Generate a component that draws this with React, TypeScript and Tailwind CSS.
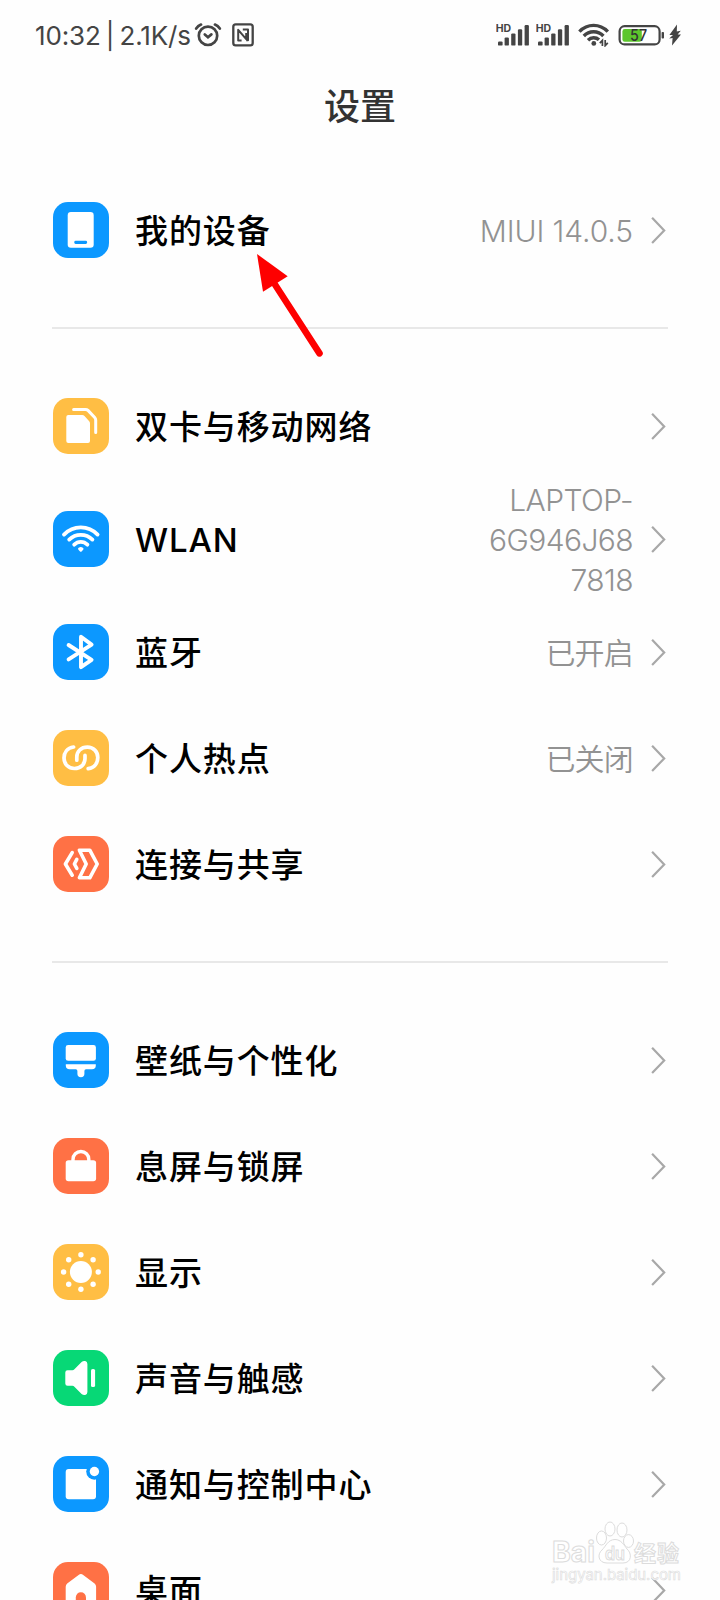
import React from 'react';

interface SettingItem {
  label: string;
  icon: React.ReactNode;
  color: string;
  value?: string;
  labelClass?: string;
  valueClass?: string;
}

const BLUE = 'bg-[#0c98ff]';
const YELLOW = 'bg-[#ffbe44]';
const ORANGE = 'bg-[#ff7145]';
const GREEN = 'bg-[#07d876]';

const DeviceIcon = () => (
  <>
    <rect x="14.7" y="10" width="26" height="35.8" rx="3.2" fill="#fff" />
    <rect x="21.3" y="38.7" width="12.8" height="3.2" rx="1.3" fill="#0c98ff" />
  </>
);

const SimIcon = () => (
  <>
    <path d="M15.3 17H29.2Q30.6 17 31.5 18L36.2 23.2Q37 24.2 37 25.5V43Q37 45 35 45H15.3Q13.3 45 13.3 43V19Q13.3 17 15.3 17Z" fill="#fff" />
    <path d="M20.6 11.4H32.4Q34 11.4 35 12.4L41.7 19.6Q42.7 20.7 42.7 22V34.6" fill="none" stroke="#fff" strokeWidth="3" strokeLinecap="round" />
  </>
);

const WifiIcon = () => (
  <g fill="none" stroke="#fff" strokeWidth="3.8" strokeLinecap="round">
    <path d="M11 23.6Q18 16.4 27.8 16.4T44.6 23.6" />
    <path d="M16.2 28.6Q21 23.8 27.8 23.8T39.4 28.6" />
    <path d="M21.2 33.7Q24 30.9 27.8 30.9T34.4 33.7" />
    <path d="M26.4 37.8Q27.8 37 29.2 37.8L27.8 39.4Z" fill="#fff" strokeWidth="2.6" strokeLinejoin="round" />
  </g>
);

const BluetoothIcon = () => (
  <path d="M15.6 21L38.6 35.8L28 43.2V12.8L38.6 20.6L15.6 35.4" fill="none" stroke="#fff" strokeWidth="3.9" strokeLinecap="round" strokeLinejoin="round" />
);

const HotspotIcon = () => (
  <g fill="none" stroke="#fff" strokeWidth="3.7" strokeLinecap="round">
    <path d="M20.6 17C14.2 18 11 22.6 11 28C11 34 15.4 38.5 21.4 38.5C27.8 38.5 32 34 32 28.6V25.4" />
    <path d="M35.2 38.6C41.6 37.6 44.8 33 44.8 27.6C44.8 21.6 40.4 17.1 34.4 17.1C28 17.1 23.8 21.6 23.8 27V30.2" />
  </g>
);

const ShareIcon = () => (
  <g fill="none" stroke="#fff" strokeWidth="3.6" strokeLinecap="round" strokeLinejoin="round">
    <path d="M19.2 16.6L12.4 28L19.2 39.2" />
    <path d="M23.8 23.4L21.4 28L23.8 32.4" />
    <path d="M26.4 14.2H36.8L44.2 28L36.8 41.8H26.4L33.2 28Z" />
  </g>
);

const BrushIcon = () => (
  <>
    <rect x="12.7" y="13" width="30.2" height="15.8" rx="2.4" fill="#fff" />
    <path d="M12.8 32.2H42.8V33.4Q42.8 37.2 39 37.2H33Q31.4 37.2 31.4 39V41.8Q31.4 45.2 27.9 45.2T24.4 41.8V39Q24.4 37.2 22.8 37.2H16.6Q12.8 37.2 12.8 33.4Z" fill="#fff" />
  </>
);

const LockIcon = () => (
  <>
    <rect x="12.7" y="22.3" width="30.4" height="21" rx="2.8" fill="#fff" />
    <path d="M20 24V21.4A7.9 7.9 0 0 1 35.8 21.4V24" fill="none" stroke="#fff" strokeWidth="3.4" />
  </>
);

const SunIcon = () => (
  <g fill="#fff">
    <circle cx="27.9" cy="28" r="11" />
    <circle cx="27.9" cy="10.7" r="2.7" />
    <circle cx="40.1" cy="15.8" r="2.7" />
    <circle cx="45.2" cy="28" r="2.7" />
    <circle cx="40.1" cy="40.2" r="2.7" />
    <circle cx="27.9" cy="45.3" r="2.7" />
    <circle cx="15.7" cy="40.2" r="2.7" />
    <circle cx="10.6" cy="28" r="2.7" />
    <circle cx="15.7" cy="15.8" r="2.7" />
  </g>
);

const SoundIcon = () => (
  <g fill="#fff">
    <path d="M14.5 20.2H19.4Q20.6 20.2 21.4 19.2L28.6 11.9Q30.2 10.6 32.2 11Q34.4 11.5 34.4 14V42Q34.4 44.4 32.2 45Q30.2 45.4 28.6 44L21.4 36.8Q20.6 35.8 19.4 35.8H14.5Q12.3 35.8 12.3 33.6V22.4Q12.3 20.2 14.5 20.2Z" />
    <rect x="38" y="19" width="4.1" height="18" rx="1.6" />
  </g>
);

const NotificationIcon = () => (
  <>
    <rect x="12.7" y="13" width="30.3" height="30.2" rx="3" fill="#fff" />
    <circle cx="41.4" cy="15.5" r="8.2" fill="#0c98ff" />
    <circle cx="41.4" cy="15.5" r="4.7" fill="#fff" />
  </>
);

const HomeIcon = () => (
  <>
    <path d="M25.6 13Q27.9 11.2 30.2 13L41.6 21.6Q43.1 22.8 43.1 24.8V42Q43.1 44 41 44H14.8Q12.7 44 12.7 42V24.8Q12.7 22.8 14.2 21.6Z" fill="#fff" />
    <path d="M22.8 46V35.4A5.1 5.1 0 0 1 33 35.4V46Z" fill="#ff7145" />
  </>
);

const groups: SettingItem[][] = [
  [{ label: '我的设备', icon: <DeviceIcon />, color: BLUE, value: 'MIUI 14.0.5', valueClass: 'tracking-[-0.1px]' }],
  [
    { label: '双卡与移动网络', icon: <SimIcon />, color: YELLOW },
    {
      label: 'WLAN',
      icon: <WifiIcon />,
      color: BLUE,
      value: 'LAPTOP-\n6G946J68\n7818',
      labelClass: 'tracking-[0.9px]',
      valueClass: 'tracking-[-0.6px]',
    },
    { label: '蓝牙', icon: <BluetoothIcon />, color: BLUE, value: '已开启' },
    { label: '个人热点', icon: <HotspotIcon />, color: YELLOW, value: '已关闭' },
    { label: '连接与共享', icon: <ShareIcon />, color: ORANGE },
  ],
  [
    { label: '壁纸与个性化', icon: <BrushIcon />, color: BLUE },
    { label: '息屏与锁屏', icon: <LockIcon />, color: ORANGE },
    { label: '显示', icon: <SunIcon />, color: YELLOW },
    { label: '声音与触感', icon: <SoundIcon />, color: GREEN },
    { label: '通知与控制中心', icon: <NotificationIcon />, color: BLUE },
    { label: '桌面', icon: <HomeIcon />, color: ORANGE },
  ],
];

const Signal = () => (
  <svg width="34" height="24" viewBox="0 0 34 24" className="shrink-0">
    <text x="-0.3" y="9.2" fontSize="10.5" fontWeight="700" fill="#444" textLength="15.4" lengthAdjust="spacingAndGlyphs">HD</text>
    <g fill="#444">
      <rect x="2" y="18.4" width="4.6" height="4.2" rx="1.2" />
      <rect x="8.6" y="14.4" width="4.3" height="8.2" rx="1.2" />
      <rect x="15.2" y="10.4" width="4.3" height="12.2" rx="1.2" />
      <rect x="21.9" y="6.2" width="4.3" height="16.4" rx="1.2" />
      <rect x="28.6" y="2" width="4.3" height="20.6" rx="1.2" />
    </g>
  </svg>
);

const StatusBar: React.FC = () => (
  <div className="flex h-[70px] items-center justify-between pl-[35px] pr-[38px] text-[#444]">
    <div className="flex items-center">
      <span className="mt-px w-[157px] whitespace-nowrap text-[26px] leading-none tracking-[-0.15px] [word-spacing:-2px]">10:32 | 2.1K/s</span>
      <svg width="28" height="24" viewBox="0 0 28 24" className="ml-[2px]" fill="none" stroke="#444" strokeWidth="2.7" strokeLinecap="round">
        <circle cx="14" cy="12.8" r="9.2" />
        <path d="M10.8 11.4L14 14.2L17.4 11.4" />
        <path d="M2.2 5.6Q4 2.8 7 1.6M21 1.6Q24 2.8 25.8 5.6" />
      </svg>
      <svg width="22" height="24" viewBox="0 0 22 24" className="ml-[10px]" fill="none" stroke="#444" strokeWidth="2.3">
        <rect x="1.3" y="1.4" width="19.4" height="21" rx="2.4" />
        <path d="M9.6 17.4H6.2V6.8L14.2 16.2V10M10.8 6.6H16V17.2H14.2" strokeWidth="2" strokeLinejoin="round" />
      </svg>
    </div>
    <div className="flex items-center">
      <Signal />
      <div className="ml-[6px] flex">
        <Signal />
      </div>
      <svg width="32" height="24" viewBox="0 0 32 24" className="ml-[8px]" fill="none" stroke="#444" strokeWidth="3.4">
        <path d="M1.4 8.6Q7.4 2.4 15.6 2.4T29.8 8.6" />
        <path d="M5.8 13Q9.8 8.8 15.6 8.8T25.4 13" />
        <path d="M10 17.2Q12.4 14.8 15.6 14.8T21 16.8" />
        <circle cx="15.8" cy="20.4" r="2.4" fill="#444" stroke="none" />
        <path d="M24.4 23V17.4L21.8 20.2M27.2 17V22.6L29.8 19.8" strokeWidth="1.7" />
      </svg>
      <svg width="48" height="24" viewBox="0 0 48 24" className="ml-[7px]">
        <rect x="2.6" y="3.2" width="40" height="18.2" rx="5" fill="#fff" stroke="#444" strokeWidth="2.2" />
        <rect x="5.4" y="6" width="19.4" height="12.8" rx="2.4" fill="#5cc62c" />
        <rect x="44.6" y="9" width="2.4" height="6.6" rx="0.8" fill="#444" />
        <text x="21.6" y="18.2" textAnchor="middle" fontSize="16.5" fontWeight="500" fill="#333" textLength="17" lengthAdjust="spacingAndGlyphs">57</text>
      </svg>
      <svg width="14" height="24" viewBox="0 0 14 24" className="ml-[3px]">
        <path d="M9 1.6L1.4 12H5L1.2 15.4L4.6 15L4 22.4L13 11.4H9.6L12.8 7.8L8.8 8.6Z" fill="#444" />
      </svg>
    </div>
  </div>
);

const SettingRow: React.FC<{ item: SettingItem }> = ({ item }) => (
  <div className="flex min-h-[106px] items-center">
    <div className={`h-14 w-14 shrink-0 rounded-[15px] ${item.color}`}>
      <svg width="56" height="56" viewBox="0 0 56 56">
        {item.icon}
      </svg>
    </div>
    <span className={`ml-[26px] flex-1 whitespace-nowrap pt-0.5 text-[33px] font-medium leading-10 text-black ${item.labelClass ?? 'tracking-[0.9px]'}`}>
      {item.label}
    </span>
    {item.value && (
      <span className={`mt-px -mb-px whitespace-pre text-right text-[30px] font-[350] leading-10 text-[#929292] ${item.valueClass ?? 'tracking-[-0.8px]'}`}>
        {item.value}
      </span>
    )}
    <svg width="16" height="28" viewBox="0 0 16 28" className="ml-[18px] shrink-0" fill="none" stroke="#a8a8a8" strokeWidth="2.2">
      <path d="M1.1 1.8L13.2 14.4L1.1 27" />
    </svg>
  </div>
);

const Watermark: React.FC = () => (
  <svg className="absolute left-[548px] top-[1518px]" width="140" height="70" viewBox="0 0 140 70" fill="#fff" stroke="#dcdcdc" strokeWidth="1">
    <text x="4" y="44" fontSize="28" fontWeight="700" textLength="43" lengthAdjust="spacingAndGlyphs">Bai</text>
    <ellipse cx="53.5" cy="20" rx="5" ry="7" />
    <ellipse cx="62" cy="11" rx="5" ry="7" />
    <ellipse cx="74" cy="12" rx="5" ry="7" />
    <ellipse cx="80.5" cy="23" rx="5" ry="6.4" />
    <path d="M67 21.5C73 21.5 76 27 79 31C84 35 84 45 75 45H59C50 45 49 36 54 32C58 28 60 21.5 67 21.5Z" />
    <text x="57" y="42" fontSize="18" fontWeight="600" textLength="20" lengthAdjust="spacingAndGlyphs">du</text>
    <text x="86" y="43" fontSize="22" fontWeight="700" textLength="45">经验</text>
    <text x="4" y="62" fontSize="15" fontWeight="400" textLength="129" strokeWidth="0.6">jingyan.baidu.com</text>
  </svg>
);

const App: React.FC = () => {
  return (
    <div className="relative h-[1600px] w-[720px] overflow-hidden bg-[#fefefe] font-['Inter','Noto_Sans_CJK_SC',sans-serif]">
      <StatusBar />
      <h1 className="flex h-[107px] justify-center pt-[11px] text-[36px] font-medium leading-[52px] text-[#333]">设置</h1>

      <main className="px-[53px]">
        {groups.map((items, index) => (
          <section key={index}>
            {index > 0 && <div className="-mx-px my-11 h-0.5 bg-[#e8e8e8]" />}
            {items.map((item) => (
              <SettingRow key={item.label} item={item} />
            ))}
          </section>
        ))}
      </main>

      {/* Pointer to the first entry */}
      <svg className="absolute left-[250px] top-[248px]" width="80" height="115" viewBox="0 0 80 115">
        <path d="M24 35L69.5 105.4" stroke="#fe0000" strokeWidth="6.6" strokeLinecap="round" />
        <path d="M7 6L37.7 28.3L13 43.7Z" fill="#fe0000" />
      </svg>

      <Watermark />
    </div>
  );
};

export default App;
